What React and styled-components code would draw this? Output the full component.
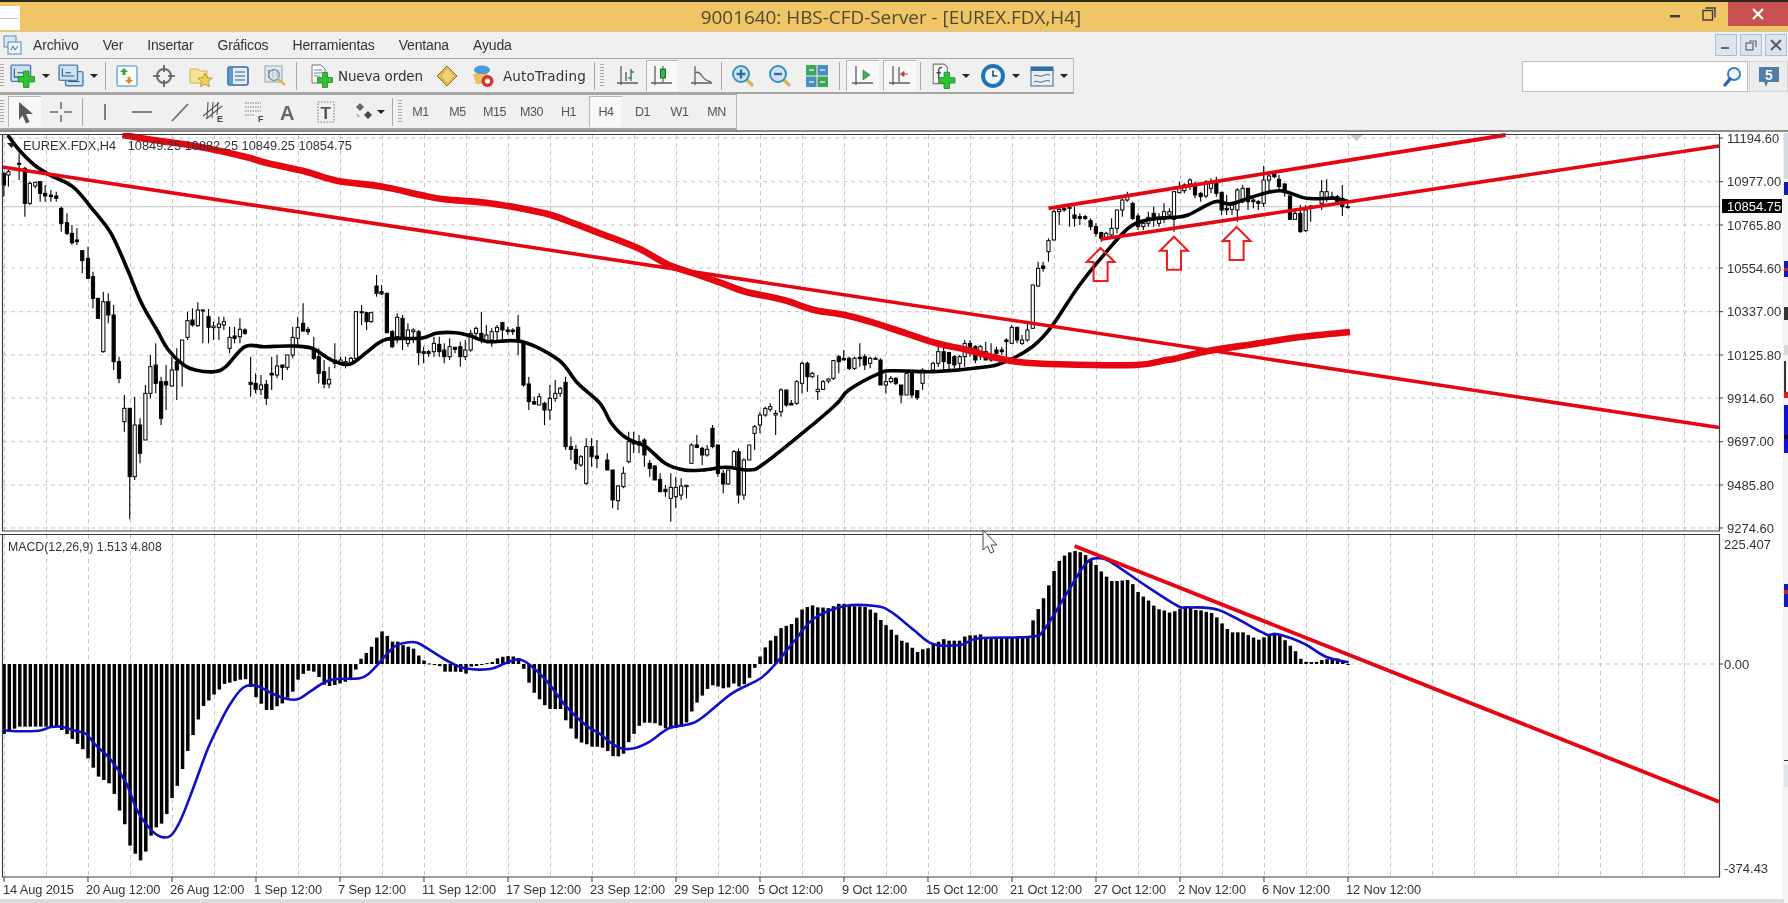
import React from "react";
import styled, { createGlobalStyle } from "styled-components";

const GlobalStyle = createGlobalStyle`
  html, body {
    margin: 0;
    padding: 0;
    background: #f0f0f0;
    overflow: hidden;
  }
`;

const UI_FONT = `"Liberation Sans", Arial, sans-serif`;

const Window = styled.div`
  width: 1788px;
  height: 903px;
  display: flex;
  flex-direction: column;
  overflow: hidden;
  font-family: ${UI_FONT};
  background: #f0f0f0;
  border-top: 2px solid #2a2a20;
  box-sizing: border-box;
  filter: blur(0.4px);
`;

const TitleBar = styled.div`
  height: 30px;
  flex: none;
  display: flex;
  align-items: center;
  background: #f0c566;
  border-bottom: 1px solid #d8c7a0;
  box-sizing: border-box;
`;

const AppLogo = styled.div`
  width: 20px;
  height: 24px;
  margin-top: 3px;
  background: #fff;
  display: flex;
  align-items: center;
`;

const LogoScribble = styled.div`
  width: 18px;
  height: 1px;
  background: #c4c4c4;
`;

const TitleText = styled.div`
  flex: none;
  width: 1500px;
  margin-left: 121px;
  text-align: center;
  font-family: "Open Sans", sans-serif;
  font-size: 18.9px;
  color: #51492f;
  white-space: nowrap;
`;

const CaptionButtons = styled.div`
  display: flex;
  align-items: flex-start;
  align-self: flex-start;
  margin-left: auto;
`;

const CaptionBtn = styled.div`
  width: ${(p) => p.$w}px;
  height: 24px;
  display: flex;
  align-items: center;
  justify-content: center;
  background: ${(p) => (p.$close ? "#c75050" : "transparent")};
`;

const MenuBar = styled.div`
  height: 26px;
  flex: none;
  display: flex;
  align-items: center;
  padding-left: 3px;
  background: #f0f0f0;
`;

const MenuItems = styled.div`
  display: flex;
  gap: 24px;
  margin-left: 11px;
  font-size: 14px;
  letter-spacing: -0.15px;
  color: #33333a;
`;

const MdiButtons = styled.div`
  display: flex;
  gap: 3px;
  margin-left: auto;
  margin-right: 1px;
`;

const MdiBtn = styled.div`
  width: 22px;
  height: 22px;
  display: flex;
  align-items: center;
  justify-content: center;
  background: #dce5ef;
  border: 1px solid #a9bfd6;
  box-sizing: border-box;
`;

const ToolRow = styled.div`
  height: ${(p) => p.$h}px;
  flex: none;
  display: flex;
  align-items: stretch;
  justify-content: space-between;
`;

const Toolbar = styled.div`
  width: ${(p) => p.$w}px;
  display: flex;
  align-items: center;
  box-sizing: border-box;
  border-top: 1px solid #a6a6a6;
  border-bottom: 2px solid #a6a6a6;
  border-right: 1px solid #b8b8b8;
  background: #f0f0f0;
`;

const Grip = styled.div`
  width: 4px;
  height: 24px;
  flex: none;
  margin-left: ${(p) => p.$ml || 0}px;
  background: repeating-linear-gradient(180deg, #a8a8a8 0 1px, #f0f0f0 1px 3px);
`;

const Sep = styled.div`
  width: 1px;
  height: 28px;
  flex: none;
  margin-left: ${(p) => p.$ml || 0}px;
  background: #a8a8a8;
`;

const Tool = styled.div`
  flex: none;
  display: flex;
  align-items: center;
  justify-content: ${(p) => (p.$w ? "center" : "flex-start")};
  gap: ${(p) => p.$gap ?? 5}px;
  width: ${(p) => (p.$w ? `${p.$w}px` : "auto")};
  height: ${(p) => (p.$active ? "31px" : "auto")};
  margin-left: ${(p) => p.$ml || 0}px;
  box-sizing: border-box;
  background: ${(p) => (p.$active ? "#f8f8f8" : "transparent")};
  border-top: ${(p) => (p.$active ? "1px solid #b4b4b4" : "none")};
  border-left: ${(p) => (p.$active ? "1px solid #b4b4b4" : "none")};
`;

const ToolLabel = styled.span`
  font-family: "DejaVu Sans", sans-serif;
  font-size: 13.5px;
  letter-spacing: ${(p) => p.$ls ?? -0.15}px;
  color: #333;
  white-space: nowrap;
`;

const Period = styled.span`
  font-size: 12.5px;
  color: #555;
  letter-spacing: -0.4px;
`;

const Caret = styled.span`
  width: 0;
  height: 0;
  flex: none;
  margin-left: ${(p) => p.$ml ?? 1}px;
  border-left: 4px solid transparent;
  border-right: 4px solid transparent;
  border-top: 4px solid #222;
`;

const SearchArea = styled.div`
  display: flex;
  align-items: stretch;
  height: 31px;
  margin-top: 3px;
`;

const SearchBox = styled.div`
  width: 226px;
  display: flex;
  align-items: center;
  justify-content: flex-end;
  padding-right: 5px;
  background: #fff;
  border: 1px solid #bdbdbd;
  box-sizing: border-box;
`;

const MailBtn = styled.div`
  width: 39px;
  margin-left: 1px;
  display: flex;
  align-items: center;
  justify-content: center;
  background: #ececec;
  border: 1px solid #d4d4d4;
  box-sizing: border-box;
`;

const Rule = styled.div`
  height: 3px;
  flex: none;
  background: #fff;
  border-top: 2px solid #8c8c8c;
  box-sizing: border-box;
`;

const ChartSvg = styled.svg`
  display: block;
  flex: none;
  width: 1788px;
  height: 770px;
  font-family: ${UI_FONT};
`;

/* ---- chart data, traced from the zoomed crops ---- */

const SX = 600 / 1568;
const at = (ox, oy) => ([x, y]) => [ox + x * SX, oy + y / 3];

// catmull-rom through the traced points, the averages in the picture are smooth
const smooth = (list) => {
  let d = `M${list[0][0].toFixed(1)} ${list[0][1].toFixed(1)}`;
  for (let i = 0; i < list.length - 1; i++) {
    const p0 = list[i - 1] || list[i];
    const p1 = list[i];
    const p2 = list[i + 1];
    const p3 = list[i + 2] || p2;
    const c1 = [p1[0] + (p2[0] - p0[0]) / 6, p1[1] + (p2[1] - p0[1]) / 6];
    const c2 = [p2[0] - (p3[0] - p1[0]) / 6, p2[1] - (p3[1] - p1[1]) / 6];
    d += `C${c1[0].toFixed(1)} ${c1[1].toFixed(1)} ${c2[0].toFixed(1)} ${c2[1].toFixed(1)} ${p2[0].toFixed(1)} ${p2[1].toFixed(1)}`;
  }
  return d;
};

const macdEnvelope = [
  ...[
    [10,612],[20,605],[50,590],[150,590],[175,612],[215,655],[240,705],[255,738],[285,760],[300,795],[310,835],[325,878],[340,948],[352,968],[365,995],[380,968],[393,920],[407,893],[420,885],[435,855],[448,808],[462,772],[475,725],[490,665],[503,620],[517,572],[530,530],[545,512],[558,495],[572,480],[585,462],[600,458],[625,450],[640,445],[655,470],[668,500],[682,520],[695,540],[710,540],[725,528],[738,520],[750,505],[765,485],[778,450],[792,432],[805,422],[820,425],[833,440],[848,465],[860,468],[875,465],[890,460],[903,455],[917,450],[930,418],[942,388],[955,372],[970,352],[985,322],[997,303],[1010,315],[1025,335],[1040,335],[1052,345],[1066,350],[1080,355],[1093,375],[1106,390],[1120,400],[1135,403],[1147,405],[1160,425],[1175,425],[1190,425],[1203,425],[1217,432],[1230,410],[1245,408],[1260,402],[1285,397],[1300,385],[1315,380],[1330,378],[1345,380],[1358,385],[1370,420],[1382,457],[1396,488],[1410,508],[1423,525],[1437,537],[1465,537],[1478,570],[1492,595],[1505,625],[1518,637],[1532,642],[1545,650],[1560,650],
  ].map(at(0, 530)),
  ...[
    [15,655],[30,678],[45,680],[60,675],[72,642],[86,617],[100,590],[112,578],[140,578],[155,585],[170,595],[195,595],[210,590],[225,580],[238,548],[252,520],[265,500],[277,482],[290,465],[305,468],[320,475],[335,473],[350,460],[362,470],[375,465],[390,445],[403,417],[417,382],[430,355],[445,332],[458,320],[472,295],[485,288],[498,285],[512,268],[525,240],[540,232],[553,225],[567,232],[580,232],[595,235],[608,230],[620,222],[635,220],[650,228],[692,230],[705,238],[718,245],[732,268],[745,283],[760,298],[773,312],[787,332],[800,335],[815,352],[828,367],[842,358],[857,355],[870,342],[885,335],[897,327],[912,332],[940,332],[952,320],[965,316],[980,316],[993,312],[1005,322],[1125,322],[1128,280],[1142,245],[1155,215],[1168,182],[1182,135],[1196,98],[1210,80],[1225,68],[1240,63],[1252,65],[1265,72],[1280,85],[1295,103],[1308,122],[1322,138],[1335,153],[1350,153],[1380,150],[1392,162],[1405,185],[1420,200],[1432,210],[1445,225],[1458,237],[1472,240],[1487,248],[1500,245],[1513,237],[1527,232],[1553,235],
  ].map(at(600, 530)),
  ...[
    [0,232],[15,240],[30,240],[45,245],[60,248],[72,258],[87,278],[100,295],[115,307],[145,307],[157,315],[170,322],[183,330],[197,323],[210,315],[225,312],[240,315],[253,330],[267,347],[280,362],[293,385],[305,395],[332,397],[350,390],[362,388],[375,385],[390,385],[405,392],[417,397],
  ].map(at(1188, 530)),
];

const macdSignal = [
  ...[
    [10,595],[22,602],[100,602],[130,592],[160,590],[190,600],[225,612],[250,645],[290,690],[330,760],[360,845],[395,900],[420,920],[445,918],[470,875],[500,790],[540,665],[570,590],[600,525],[635,473],[670,467],[710,490],[750,507],[780,507],[810,485],[850,455],[880,447],[940,445],[965,430],[990,400],[1030,350],[1060,338],[1090,338],[1130,365],[1170,393],[1215,415],[1280,417],[1320,400],[1355,388],[1385,405],[1430,455],[1480,530],[1530,585],
  ].map(at(0, 530)),
  ...[
    [0,612],[30,640],[55,655],[90,655],[130,635],[180,595],[235,582],[270,560],[345,490],[420,445],[460,400],[510,330],[560,265],[640,228],[720,228],[760,245],[820,300],[870,342],[940,345],[990,325],[1125,320],[1160,300],[1220,190],[1270,100],[1305,85],[1340,100],[1430,170],[1510,228],
  ].map(at(600, 530)),
  ...[
    [0,232],[80,240],[190,305],[210,315],[230,312],[270,325],[310,345],[360,380],[420,397],
  ].map(at(1188, 530)),
];

const slowMa = [
  ...[
    [320,15],[400,30],[520,50],[640,80],[700,100],[800,125],[880,152],[1000,170],[1100,195],[1160,208],[1270,218],[1360,235],[1440,255],[1500,280],
  ].map(at(0, 130)),
  ...[
    [0,310],[100,355],[180,405],[250,432],[320,460],[380,485],[480,510],[560,540],[640,555],[720,580],[800,610],[880,640],[960,660],[1040,685],[1100,697],[1200,703],[1400,705],[1480,690],
  ].map(at(600, 130)),
  [1174,359],[1208,351],[1254,344],[1300,337],[1350,332],
];

const fastMa = [
  ...[
    [20,15],[50,60],[90,105],[130,135],[190,170],[240,235],[290,310],[330,410],[370,520],[410,600],[440,660],[480,705],[510,720],[560,725],[590,710],[640,650],[690,650],[760,648],[815,655],[870,692],[915,702],[960,665],[1010,628],[1100,625],[1140,610],[1190,608],[1230,618],[1275,635],[1365,635],[1460,690],[1510,760],
  ].map(at(0, 130)),
  ...[
    [0,820],[30,880],[70,925],[120,950],[170,1000],[220,1020],[270,1020],[330,1012],[390,1020],[430,1000],[560,880],[620,820],[650,780],[730,730],[770,722],[870,725],[1000,712],[1060,695],[1130,650],[1180,590],[1250,470],[1320,370],[1385,290],[1440,268],[1500,262],
  ].map(at(600, 130)),
  ...[[0,645],[70,605],[110,612],[170,590],[240,572],[310,595],[380,595],[420,605]].map(at(1188, 0)),
];

// x, wick top, wick bottom, body top, body bottom, filled
const candlesA = [
  [10,125,200,130,165,1],[22,120,170,125,135,0],[50,70,150,100,102,1],[65,110,260,115,220,1],[78,155,225,160,220,0],[92,155,175,157,168,0],[105,155,215,155,190,1],[118,165,215,190,198,1],[133,180,215,195,200,1],[147,185,215,198,205,1],[160,230,305,235,280,1],[175,250,315,278,310,1],[188,285,345,310,338,1],[201,295,345,330,335,1],[215,360,430,362,392,1],[230,350,445,385,445,1],[243,425,535,440,505,1],[256,505,565,505,565,1],[270,485,668,515,665,0],[283,490,580,515,555,1],[297,525,720,555,695,1],[311,680,760,695,745,1],[325,795,905,835,875,0],[339,835,1168,835,1040,1],[352,800,1050,885,1040,0],[366,865,1000,885,970,1],[380,765,930,790,930,0],[393,675,805,710,790,0],[407,640,790,705,760,1],[421,740,885,755,865,1],[434,705,840,755,765,1],[449,680,770,720,768,0],[462,655,810,695,720,1],[476,630,770,630,700,0],[490,545,630,572,622,0],[503,535,590,570,585,1],[517,517,590,540,587,0],[530,538,640,540,542,0],[545,537,640,560,592,1],[558,575,630,588,593,0],[572,560,630,582,592,0],[585,560,600,575,585,0],[600,590,670,622,655,0],[613,590,640,618,625,1],[627,565,640,598,620,0],[640,595,615,600,610,1],[655,680,800,757,763,1],[668,730,790,760,778,1],[682,735,795,765,778,0],[696,750,825,763,805,1],[710,680,780,730,735,1],[724,675,745,708,735,0],[738,705,750,705,712,1],[751,675,720,675,712,0],[765,590,685,622,675,0],[778,560,650,592,625,0],[792,520,605,580,603,1],[805,590,615,598,605,1],[820,620,690,655,685,1],[833,655,760,680,730,1],[847,690,775,725,762,1],[860,710,775,748,762,0],[875,640,715,690,700,1],[890,680,700,690,698,0],[903,680,715,695,700,0],[917,680,705,685,700,0],[930,545,690,545,685,0],[945,525,585,545,548,1],[958,545,600,548,575,1],[970,545,578,548,575,0],[984,435,500,468,490,1],[997,465,495,485,492,1],[1011,488,610,490,608,1],[1025,600,655,605,650,1],[1038,550,640,562,620,0],[1052,555,660,565,625,1],[1066,580,650,600,640,0],[1080,595,640,600,605,0],[1094,600,705,605,668,1],[1107,650,700,665,670,1],[1120,660,680,665,670,1],[1134,620,680,640,665,0],[1148,620,680,643,665,1],[1161,640,700,660,680,1],[1175,625,690,650,680,0],[1189,650,670,652,658,1],[1203,635,710,650,680,1],[1216,630,690,660,680,0],[1230,600,665,610,660,0],[1244,590,630,595,610,0],[1258,545,640,610,630,1],[1271,585,640,615,635,0],[1285,595,650,605,630,0],[1299,585,630,592,605,0],[1313,575,630,578,600,1],[1327,590,615,600,605,1],[1340,595,615,600,605,1],[1354,555,675,592,635,1],[1368,635,770,640,765,1],[1382,740,840,762,815,1],[1396,800,825,815,822,1],[1409,790,825,800,825,0],[1423,815,885,820,840,1],[1437,765,870,805,840,0],[1451,750,815,790,805,0],[1464,770,800,775,790,0],[1478,740,960,757,950,1],[1492,920,990,950,958,1],[1505,945,1020,958,1000,1],[1518,975,1010,980,1005,0],[1532,925,1065,950,1060,0],[1546,925,1010,950,980,1],[1560,930,1015,978,985,1],
];

const candlesB = [
  [19,970,1020,990,1020,1],[33,1020,1135,1020,1110,1],[47,1065,1140,1068,1112,0],[61,1010,1075,1030,1070,0],[75,905,1000,935,995,0],[88,905,970,935,942,1],[102,915,970,935,945,1],[116,925,1010,930,975,1],[130,990,1040,1000,1015,1],[143,1005,1050,1008,1050,1],[157,1030,1085,1048,1085,1],[171,1065,1100,1078,1085,1],[185,1030,1175,1072,1105,0],[198,1040,1135,1072,1100,0],[212,1045,1110,1068,1095,0],[226,1065,1105,1066,1070,0],[239,940,1000,945,1000,0],[253,915,955,945,952,1],[267,950,1005,955,975,1],[280,945,980,958,975,0],[294,885,955,895,950,1],[308,945,1040,945,1030,1],[322,1020,1090,1030,1062,1],[335,1020,1065,1020,1062,0],[350,960,1020,965,1015,0],[362,955,1120,965,1095,1],[376,985,1110,990,1095,0],[390,945,990,945,990,0],[404,885,960,890,910,0],[418,845,910,855,885,0],[432,830,860,835,855,0],[445,820,845,830,838,0],[459,840,915,850,855,0],[473,775,860,780,845,0],[487,780,830,780,825,1],[500,810,825,820,825,1],[514,750,825,755,820,0],[528,695,790,700,760,0],[542,695,785,700,740,1],[555,725,745,730,740,0],[569,735,810,778,785,0],[583,750,780,755,778,0],[597,745,760,747,753,0],[610,690,750,692,745,0],[624,675,730,680,695,1],[637,660,690,685,690,1],[651,680,720,685,715,1],[665,680,720,685,715,0],[679,640,710,682,686,1],[692,672,720,680,705,1],[706,680,715,685,700,0],[720,680,690,685,688,1],[733,685,765,690,765,1],[747,730,790,755,765,0],[760,738,760,745,755,0],[773,742,765,745,760,1],[787,765,820,765,795,1],[801,725,795,730,795,0],[815,725,805,730,795,1],[829,780,810,782,803,1],[843,715,780,720,760,0],[870,695,730,700,720,0],[884,650,710,665,700,0],[898,650,720,665,695,1],[912,665,720,668,700,1],[926,675,715,680,705,1],[940,675,720,680,700,0],[953,630,710,640,680,0],[967,630,680,640,660,1],[981,645,700,650,690,1],[994,645,690,650,665,0],[1008,635,690,665,690,1],[1022,640,695,680,690,0],[1036,650,680,660,670,1],[1050,650,675,660,665,1],[1062,625,680,630,635,1],[1076,585,640,592,640,0],[1090,590,640,592,630,1],[1103,615,645,630,640,0],[1117,575,635,600,630,0],[1131,465,595,465,595,0],[1145,395,470,415,468,0],[1158,395,425,408,415,1],[1172,325,395,332,365,0],[1186,240,330,245,330,0],[1200,230,285,238,245,0],[1213,230,245,236,240,1],[1227,230,290,232,235,1],[1240,230,290,255,265,1],[1254,250,285,260,265,1],[1268,255,270,260,265,1],[1282,265,300,272,290,1],[1296,280,320,290,310,1],[1310,305,335,308,325,1],[1323,305,330,310,322,0],[1337,265,325,295,315,0],[1351,240,310,240,295,0],[1365,205,260,210,240,0],[1378,185,215,195,210,0],[1392,215,270,220,265,1],[1406,250,300,258,290,1],[1420,270,300,280,290,0],[1433,245,290,262,280,0],[1447,230,290,250,265,1],[1461,250,290,262,280,0],[1474,220,280,245,262,0],[1488,235,265,245,255,0],
];

const candlesC = [
  [12,95,215,95,178,0],[28,65,100,85,98,0],[43,70,100,75,92,0],[60,55,90,60,72,0],[75,65,115,80,105,1],[92,95,125,100,110,1],[108,60,115,70,108,0],[123,55,100,70,85,0],[139,50,110,70,100,1],[155,95,165,97,150,1],[170,105,165,145,150,1],[186,125,165,135,148,0],[202,85,185,90,150,0],[218,75,130,85,125,0],[234,85,150,85,125,1],[250,115,145,120,125,1],[265,120,150,125,130,1],[281,18,140,60,130,0],[297,40,95,48,60,0],[313,40,55,42,50,1],[327,45,90,58,80,1],[344,70,110,72,95,1],[360,105,180,108,178,1],[375,150,180,160,178,0],[391,135,218,160,215,1],[407,135,215,150,212,0],[422,135,185,138,140,0],[455,60,150,95,130,0],[470,58,125,95,115,0],[486,95,120,110,118,1],[502,105,130,110,125,1],[517,75,168,115,140,1],[533,125,145,140,143,1],
];

const candles = [
  ...candlesA.map((c) => ({ x: c[0] * SX, y: c.slice(1, 5).map((v) => 130 + v / 3), filled: c[5] })),
  ...candlesB.map((c) => ({ x: 600 + c[0] * SX, y: c.slice(1, 5).map((v) => 130 + v / 3), filled: c[5] })),
  ...candlesC.map((c) => ({ x: 1170 + c[0] / 3, y: c.slice(1, 5).map((v) => 160 + v / 3), filled: c[5] })),
];

const envelopeAt = (x) => {
  for (let i = 1; i < macdEnvelope.length; i++) {
    const [x0, y0] = macdEnvelope[i - 1];
    const [x1, y1] = macdEnvelope[i];
    if (x <= x1) {
      if (x < x0) return y0;
      return y0 + ((y1 - y0) * (x - x0)) / (x1 - x0 || 1);
    }
  }
  return 664;
};

const bars = Array.from({ length: 257 }, (_, i) => {
  const x = 4 + i * 5.25;
  return { x, y: envelopeAt(x) };
});

const gridX = Array.from({ length: 41 }, (_, i) => 4 + i * 42);
const priceLevels = [
  ["11194.60", 138], ["10977.00", 181.7], ["10765.80", 225], ["10554.60", 268], ["10337.00", 311.7],
  ["10125.80", 355], ["9914.60", 398], ["9697.00", 441.7], ["9485.80", 485], ["9274.60", 528],
];
const timeLabels = [
  "14 Aug 2015", "20 Aug 12:00", "26 Aug 12:00", "1 Sep 12:00", "7 Sep 12:00", "11 Sep 12:00",
  "17 Sep 12:00", "23 Sep 12:00", "29 Sep 12:00", "5 Oct 12:00", "9 Oct 12:00", "15 Oct 12:00",
  "21 Oct 12:00", "27 Oct 12:00", "2 Nov 12:00", "6 Nov 12:00", "12 Nov 12:00",
];
const upArrows = [
  [1100.6, 248],
  [1174, 236.7],
  [1236.6, 227],
];
const periods = ["M1", "M5", "M15", "M30", "H1"];

const RED = "#e60611";
const AXIS = "#3c3c3c";

const ArrowMark = ({ x, y }) => (
  <path
    d={`M${x} ${y}l14 14h-7v19h-14v-19h-7z`}
    fill="none"
    stroke="#ee1c1c"
    strokeWidth="2"
  />
);

const Chart = () => (
  <ChartSvg viewBox="0 133 1788 770">
    <rect x="0" y="133" width="1783" height="767" fill="#fff" />
    <rect x="0" y="899" width="1788" height="4" fill="#dcdcdc" />

    {/* neighbouring panel peeking in at the right edge */}
    <rect x="1784" y="133" width="4" height="770" fill="#f4f4f4" />
    <rect x="1784" y="133" width="4" height="46" fill="#d3dce6" />
    <rect x="1784" y="182" width="4" height="13" fill="#1018c0" />
    <rect x="1784" y="261" width="4" height="16" fill="#1018c0" />
    <rect x="1784" y="268" width="4" height="3" fill="#d02020" />
    <rect x="1784" y="307" width="4" height="13" fill="#333" />
    <rect x="1784" y="345" width="4" height="10" fill="#d8d8d8" />
    <rect x="1784" y="361" width="2" height="31" fill="#333" />
    <rect x="1784" y="392" width="4" height="6" fill="#e01818" />
    <rect x="1784" y="405" width="4" height="48" fill="#0c14d0" />
    <rect x="1784" y="435" width="4" height="4" fill="#111" />
    <rect x="1784" y="584" width="4" height="23" fill="#1018c0" />
    <rect x="1784" y="590" width="4" height="4" fill="#d02020" />
    <rect x="1784" y="760" width="4" height="1" fill="#333" />
    <rect x="1784" y="765" width="4" height="22" fill="#dfe5ec" />

    {/* grid */}
    <g stroke="#c4c4c4" strokeDasharray="4 4" strokeWidth="1">
      {gridX.map((x) => (
        <line key={x} x1={x + 0.5} x2={x + 0.5} y1="135" y2="877" />
      ))}
      {priceLevels.map(([label, y]) => (
        <line key={label} x1="3" x2="1719" y1={y} y2={y} />
      ))}
      <line x1="1350" x2="1719" y1="664" y2="664" />
    </g>
    <line x1="3" x2="1719" y1="206.7" y2="206.7" stroke="#c4c4c4" />
    <path d="M1350 135h13l-6.5 6z" fill="#c8c8c8" />

    {/* candles */}
    <g stroke="#000" strokeWidth="1">
      {candles.map((c, i) => (
        <g key={i}>
          <line x1={c.x} x2={c.x} y1={c.y[0]} y2={c.y[1]} strokeWidth="1.1" />
          <rect
            x={c.x - 1.6}
            y={c.y[2]}
            width="3.2"
            height={Math.max(c.y[3] - c.y[2], 1)}
            fill={c.filled ? "#000" : "#fff"}
          />
        </g>
      ))}
    </g>

    <path d={smooth(fastMa)} fill="none" stroke="#000" strokeWidth="3.6" strokeLinejoin="round" />
    <path d={smooth(slowMa)} fill="none" stroke={RED} strokeWidth="6.6" strokeLinejoin="round" />

    <line x1="2" y1="167" x2="1719" y2="427.5" stroke={RED} strokeWidth="3.6" />
    <line x1="1048.5" y1="208.3" x2="1505.6" y2="135" stroke={RED} strokeWidth="3.8" />
    <line x1="1100.6" y1="239.3" x2="1719" y2="146" stroke={RED} strokeWidth="3.6" />
    {upArrows.map(([x, y]) => (
      <ArrowMark key={x} x={x} y={y} />
    ))}

    <path d="M7 143h9l-4.5 5z" fill="#222" />
    <text x="23" y="150" fontSize="12.8" fill="#333">
      EUREX.FDX,H4{"  "}
      <tspan dx="8">10849.25 10882.25 10849.25 10854.75</tspan>
    </text>

    {/* MACD */}
    {bars.map((b) => (
      <rect
        key={b.x}
        x={b.x - 1.7}
        y={Math.min(b.y, 664)}
        width="3.5"
        height={Math.max(Math.abs(b.y - 664), 1)}
        fill="#000"
      />
    ))}
    <path d={smooth(macdSignal)} fill="none" stroke="#0f10c8" strokeWidth="2.6" strokeLinejoin="round" />
    <line x1="1074.6" y1="546" x2="1719" y2="801.7" stroke={RED} strokeWidth="3.8" />
    <text x="8" y="551" fontSize="12.3" fill="#333">MACD(12,26,9) 1.513 4.808</text>

    {/* frames and axes */}
    <g fill="none" stroke={AXIS} strokeWidth="1.2">
      <path d="M0 134.5H1719.5V531H2.5V134" />
      <path d="M0 534.5H1719.5V877H2.5V534" />
    </g>
    {priceLevels.map(([label, y]) => (
      <g key={label}>
        <line x1="1719" x2="1723" y1={y} y2={y} stroke={AXIS} />
        <text x="1727" y={y + 4.7} fontSize="13" fill="#333">{label}</text>
      </g>
    ))}
    <rect x="1722" y="199" width="60" height="14" fill="#000" />
    <text x="1727" y="211" fontSize="13" fill="#fff">10854.75</text>
    <line x1="1719" x2="1723" y1="664" y2="664" stroke={AXIS} />
    <text x="1724" y="549" fontSize="13" fill="#333">225.407</text>
    <text x="1724" y="668.5" fontSize="13" fill="#333">0.00</text>
    <text x="1724" y="873" fontSize="13" fill="#333">-374.43</text>
    {timeLabels.map((label, i) => (
      <g key={label}>
        <line x1={4 + i * 84} x2={4 + i * 84} y1="877" y2="882" stroke={AXIS} />
        <text x={(i === 0 ? 3 : 2) + i * 84} y="893.5" fontSize="12.8" letterSpacing="-0.1" fill="#333">
          {label}
        </text>
      </g>
    ))}

    {/* mouse pointer */}
    <path
      d="M983 530v20l4.5-4 3 7 3.5-1.5-3-6.5h6z"
      fill="#fff"
      stroke="#444"
      strokeWidth="1"
    />
  </ChartSvg>
);

/* ---- toolbar icons ---- */

const Ico = ({ s = 24, children }) => (
  <svg width={s} height={s} viewBox="0 0 24 24" style={{ flex: "none" }}>
    {children}
  </svg>
);

const GreenPlus = ({ x = 16, y = 16 }) => (
  <path
    d={`M${x - 2.5} ${y - 7.5}h5v5h5v5h-5v5h-5v-5h-5v-5h5z`}
    fill="#2fc436"
    stroke="#1b8a22"
    strokeWidth="0.8"
  />
);

const MiniWindow = ({ x = 1, y = 2, w = 18, h = 15 }) => (
  <g>
    <rect x={x} y={y} width={w} height={h} rx="1" fill="#cfe2f3" stroke="#4a7eae" strokeWidth="1.3" />
    <path d={`M${x + 3} ${y + 3}v${h - 7}h${w - 6}`} fill="none" stroke="#33566f" strokeWidth="1" />
    <path d={`M${x + 6} ${y + 7}h5`} stroke="#33566f" fill="none" />
  </g>
);

const IconNewChart = () => (
  <Ico s={26}>
    <MiniWindow />
    <GreenPlus x={15} y={15} />
  </Ico>
);

const IconProfiles = () => (
  <Ico s={26}>
    <MiniWindow x={7} y={8} w={16} h={13} />
    <MiniWindow x={1} y={2} w={17} h={14} />
  </Ico>
);

const IconMarket = () => (
  <Ico>
    <rect x="2" y="2" width="20" height="20" rx="1.5" fill="#f5fafd" stroke="#7caecf" strokeWidth="1.6" />
    <path d="M9 4l4 4h-2.5v3h-3V8H5z" fill="#3aa33e" />
    <path d="M14 20l-4-4h2.5v-3h3v3H18z" fill="#e58a2b" />
  </Ico>
);

const IconCrosshair = () => (
  <Ico>
    <circle cx="12" cy="12" r="7" fill="none" stroke="#6c6c6c" strokeWidth="2" />
    <path d="M12 1v7M12 16v7M1 12h7M16 12h7" stroke="#555" strokeWidth="1.6" />
  </Ico>
);

const IconFolderStar = () => (
  <Ico>
    <path d="M1 5h8l2 2h7v12H1z" fill="#f8e39a" stroke="#d4b04e" />
    <path d="M16 9l2.2 4.6 5 .6-3.7 3.4 1 5-4.5-2.5-4.5 2.5 1-5-3.7-3.4 5-.6z" fill="#f2cf52" stroke="#ad8b2b" strokeWidth="0.8" />
  </Ico>
);

const IconNavigator = () => (
  <Ico>
    <rect x="2" y="3" width="20" height="18" rx="2" fill="#e4eef8" stroke="#2d6ea8" strokeWidth="1.6" />
    <rect x="3" y="4" width="4" height="16" fill="#5f9ad0" />
    <path d="M9 8h10M9 12h10M9 16h10" stroke="#3b5a78" strokeWidth="1.1" />
  </Ico>
);

const IconTester = () => (
  <Ico>
    <rect x="2" y="2" width="17" height="16" fill="#e6e6e6" stroke="#9eb2c4" strokeWidth="1.2" />
    <path d="M6 6v8M10 5v9M14 6v7" stroke="#5a6f82" strokeWidth="1.3" />
    <circle cx="11" cy="11" r="5.4" fill="#d6e6f2" fillOpacity="0.7" stroke="#6d8aa2" strokeWidth="1.2" />
    <path d="M15 15l7 6" stroke="#d8b84c" strokeWidth="2.6" />
  </Ico>
);

const IconNewOrder = () => (
  <Ico>
    <path d="M3 1h9l4 4v14H3z" fill="#fff" stroke="#777" />
    <path d="M5 6h8M5 9h8M5 12h6" stroke="#6a8aa8" />
    <GreenPlus x={16} y={16} />
  </Ico>
);

const IconDiamond = () => (
  <Ico>
    <path d="M12 2L22 12 12 22 2 12z" fill="#e2b64a" stroke="#94702a" strokeWidth="1" />
    <path d="M12 5l7 7-7 7-5-7z" fill="#f0d27a" />
  </Ico>
);

const IconAuto = () => (
  <Ico>
    <ellipse cx="11" cy="6" rx="8" ry="4.5" fill="#4d9ad4" />
    <path d="M2 10h15v10H5z" fill="#e9c35a" />
    <circle cx="16.5" cy="17" r="6" fill="#d8342c" />
    <circle cx="16.5" cy="17" r="2.6" fill="#fff" />
  </Ico>
);

const AxisGlyph = () => (
  <path d="M5 2v19M1 19h21" stroke="#56606a" strokeWidth="1.3" fill="none" />
);

const IconBars = () => (
  <Ico>
    <AxisGlyph />
    <path d="M10 8v9M15 5v12" stroke="#56606a" strokeWidth="1.4" />
    <path d="M15 8h3M15 14h-3" stroke="#2e8b45" strokeWidth="1.4" />
  </Ico>
);

const IconCandle = () => (
  <Ico>
    <AxisGlyph />
    <path d="M13 2v16" stroke="#2d5c34" />
    <rect x="10.5" y="5" width="5" height="9" fill="#36b34a" stroke="#1c6a2c" />
  </Ico>
);

const IconLine = () => (
  <Ico>
    <AxisGlyph />
    <path d="M5 9c3-2 5 0 7 3s5 5 9 6" stroke="#56606a" strokeWidth="1.3" fill="none" />
  </Ico>
);

const IconZoom = ({ minus }) => (
  <Ico>
    <path d="M14 14l8 8" stroke="#d7b64b" strokeWidth="3.2" />
    <circle cx="10" cy="10" r="8" fill="#cfe5f6" stroke="#3d8cc4" strokeWidth="2" />
    <path d={minus ? "M6 10h8" : "M5.5 10h9M10 5.5v9"} stroke="#2f6f9f" strokeWidth="2.4" />
  </Ico>
);

const IconTile = () => (
  <Ico>
    <rect x="1" y="1" width="10.5" height="10.5" fill="#3fa55a" />
    <rect x="12.5" y="1" width="10.5" height="10.5" fill="#4a8fc4" />
    <rect x="1" y="12.5" width="10.5" height="10.5" fill="#4a8fc4" />
    <rect x="12.5" y="12.5" width="10.5" height="10.5" fill="#3fa55a" />
    <path d="M4 6h5M15 6h5M4 18h5M15 18h5" stroke="#d7e8f4" strokeWidth="1.4" />
  </Ico>
);

const IconScroll = () => (
  <Ico>
    <AxisGlyph />
    <path d="M12 6l7 5-7 5z" fill="#49ad5d" stroke="#2e7c40" strokeWidth="0.7" />
  </Ico>
);

const IconShift = () => (
  <Ico>
    <AxisGlyph />
    <path d="M11 3v15" stroke="#56606a" strokeWidth="1.3" />
    <path d="M20 10h-4v-2.5L12.5 10l3.5 2.5V10" fill="#b8473c" stroke="#b8473c" />
  </Ico>
);

const IconIndicators = () => (
  <Ico s={26}>
    <path d="M3 1h10l3 3v15H3z" fill="#f7f7f7" stroke="#777" />
    <path d="M8 15V7c0-2 1-3 3-3M6 9h4" stroke="#444" strokeWidth="1.3" fill="none" />
    <GreenPlus x={15.5} y={16} />
  </Ico>
);

const IconClock = () => (
  <Ico s={26}>
    <circle cx="12" cy="12" r="11" fill="#1f73b8" />
    <circle cx="12" cy="12" r="7.4" fill="#eef5fb" />
    <path d="M12 7v5h4" stroke="#1f4e74" strokeWidth="1.5" fill="none" />
  </Ico>
);

const IconTemplates = () => (
  <Ico>
    <rect x="1" y="3" width="22" height="19" fill="#e8eff6" stroke="#5a7ca0" strokeWidth="1.2" />
    <rect x="1" y="3" width="22" height="4" fill="#2f6ea6" />
    <path d="M4 12c3-2 5 1 8 0s4-2 8-1M4 18c3-2 5 1 8 0s4-2 8-1" stroke="#59636d" fill="none" />
  </Ico>
);

const IconPointer = () => (
  <Ico>
    <path d="M6 2l14 12h-7l3.5 8-3.5 1.5-3.5-8L6 20z" fill="#555a60" />
  </Ico>
);

const IconCross = () => (
  <Ico>
    <path d="M12 2v7M12 15v7M1 12h8M15 12h8" stroke="#6a6a6a" strokeWidth="1.5" />
  </Ico>
);

const IconStroke = ({ d }) => (
  <Ico>
    <path d={d} stroke="#6a6a6a" strokeWidth="1.7" fill="none" />
  </Ico>
);

const IconChannel = () => (
  <Ico>
    <path d="M1 16L17 3M4 19L20 6M6 2l-1 16M11 2l-1 16M16 2l-1 13" stroke="#555" strokeWidth="1.1" fill="none" />
    <text x="15" y="22" fontSize="9" fontWeight="bold" fill="#444">E</text>
  </Ico>
);

const IconFibo = () => (
  <Ico>
    <path d="M2 3h16M2 7h16M2 11h16M2 15h10" stroke="#7a7a7a" strokeDasharray="1.5 1" fill="none" />
    <text x="15" y="22" fontSize="9" fontWeight="bold" fill="#444">F</text>
  </Ico>
);

const IconLetterA = () => (
  <Ico>
    <text x="4" y="20" fontSize="20" fontWeight="bold" fill="#666" fontFamily={UI_FONT}>A</text>
  </Ico>
);

const IconLetterT = () => (
  <Ico>
    <rect x="4" y="2" width="16" height="20" fill="none" stroke="#777" strokeDasharray="1.5 1.5" />
    <text x="6.5" y="19" fontSize="17" fontWeight="bold" fill="#555" fontFamily={UI_FONT}>T</text>
  </Ico>
);

const IconShapes = () => (
  <Ico>
    <path d="M8 3l4 4-4 4-4-4z" fill="#666" />
    <path d="M16 11l4 4-4 4-4-4z" fill="#444" />
    <path d="M5 14l2 3" stroke="#888" strokeWidth="1.3" />
  </Ico>
);

const IconSearch = () => (
  <svg width="20" height="22" viewBox="0 0 20 22">
    <circle cx="12" cy="8" r="6" fill="#f4f9fd" stroke="#3f7ec0" strokeWidth="2" />
    <path d="M8 13l-5 6" stroke="#2a66ae" strokeWidth="3.4" strokeLinecap="round" />
  </svg>
);

const IconMail = () => (
  <svg width="24" height="24" viewBox="0 0 24 24">
    <path d="M2 2h20v15H11l-2 5-2-5H2z" fill="#4f7fa9" />
    <text x="8" y="15" fontSize="14" fontWeight="bold" fill="#fff" fontFamily={UI_FONT}>5</text>
  </svg>
);

const App = () => (
  <Window>
    <GlobalStyle />
    <TitleBar>
      <AppLogo>
        <LogoScribble />
      </AppLogo>
      <TitleText>9001640: HBS-CFD-Server - [EUREX.FDX,H4]</TitleText>
      <CaptionButtons>
        <CaptionBtn $w={30}>
          <svg width="12" height="12" viewBox="0 0 12 12"><rect x="1" y="7" width="10" height="2.4" fill="#3a3a3a" /></svg>
        </CaptionBtn>
        <CaptionBtn $w={38}>
          <svg width="14" height="14" viewBox="0 0 14 14" fill="none" stroke="#3a3a3a" strokeWidth="1.4">
            <rect x="1" y="3.5" width="9.5" height="9.5" />
            <path d="M3.5 1h9.5v9.5" />
          </svg>
        </CaptionBtn>
        <CaptionBtn $w={60} $close>
          <svg width="12" height="12" viewBox="0 0 12 12"><path d="M1 1l10 10M11 1L1 11" stroke="#fff" strokeWidth="2.2" /></svg>
        </CaptionBtn>
      </CaptionButtons>
    </TitleBar>

    <MenuBar>
      <svg width="19" height="20" viewBox="0 0 19 20">
        <rect x="1" y="1" width="12" height="11" fill="#dbe8f4" stroke="#5a8ab5" />
        <rect x="5" y="7" width="13" height="12" fill="#eef4fa" stroke="#5a8ab5" />
        <path d="M8 15l2-4 2 4 3-4" stroke="#4b6a86" fill="none" />
      </svg>
      <MenuItems>
        <span>Archivo</span>
        <span>Ver</span>
        <span>Insertar</span>
        <span>Gráficos</span>
        <span>Herramientas</span>
        <span>Ventana</span>
        <span>Ayuda</span>
      </MenuItems>
      <MdiButtons>
        <MdiBtn>
          <svg width="12" height="12" viewBox="0 0 12 12"><rect x="1" y="8" width="8" height="2" fill="#5b6470" /></svg>
        </MdiBtn>
        <MdiBtn>
          <svg width="12" height="12" viewBox="0 0 12 12" fill="none" stroke="#5b6470" strokeWidth="1.2">
            <rect x="1" y="4" width="7" height="7" />
            <path d="M4 2h7v6" />
          </svg>
        </MdiBtn>
        <MdiBtn>
          <svg width="12" height="12" viewBox="0 0 12 12"><path d="M1 1l10 10M11 1L1 11" stroke="#55606c" strokeWidth="2.2" /></svg>
        </MdiBtn>
      </MdiButtons>
    </MenuBar>

    <ToolRow $h={36}>
      <Toolbar $w={1074}>
        <Grip />
        <Tool $ml={6}><IconNewChart /><Caret /></Tool>
        <Tool $ml={8}><IconProfiles /><Caret /></Tool>
        <Sep $ml={7} />
        <Tool $ml={9} $w={24}><IconMarket /></Tool>
        <Tool $ml={13} $w={24}><IconCrosshair /></Tool>
        <Tool $ml={13} $w={24}><IconFolderStar /></Tool>
        <Tool $ml={13} $w={24}><IconNavigator /></Tool>
        <Tool $ml={13} $w={24}><IconTester /></Tool>
        <Sep $ml={9} />
        <Tool $ml={12}><IconNewOrder /><ToolLabel>Nueva orden</ToolLabel></Tool>
        <Tool $ml={12} $w={24}><IconDiamond /></Tool>
        <Tool $ml={12} $gap={8}><IconAuto /><ToolLabel $ls={0.2}>AutoTrading</ToolLabel></Tool>
        <Sep $ml={8} />
        <Grip $ml={5} />
        <Tool $ml={12} $w={24}><IconBars /></Tool>
        <Tool $ml={6} $w={32} $active><IconCandle /></Tool>
        <Tool $ml={12} $w={24}><IconLine /></Tool>
        <Sep $ml={7} />
        <Tool $ml={9} $w={24}><IconZoom /></Tool>
        <Tool $ml={13} $w={24}><IconZoom minus /></Tool>
        <Tool $ml={13} $w={24}><IconTile /></Tool>
        <Sep $ml={10} />
        <Tool $ml={6} $w={33} $active><IconScroll /></Tool>
        <Tool $ml={4} $w={33} $active><IconShift /></Tool>
        <Sep $ml={4} />
        <Tool $ml={9}><IconIndicators /><Caret /></Tool>
        <Tool $ml={10}><IconClock /><Caret /></Tool>
        <Tool $ml={10}><IconTemplates /><Caret /></Tool>
      </Toolbar>
      <SearchArea>
        <SearchBox><IconSearch /></SearchBox>
        <MailBtn><IconMail /></MailBtn>
      </SearchArea>
    </ToolRow>

    <ToolRow $h={36}>
      <Toolbar $w={737}>
        <Grip />
        <Tool $ml={4} $w={33} $active><IconPointer /></Tool>
        <Tool $ml={8} $w={24}><IconCross /></Tool>
        <Sep $ml={9} />
        <Tool $ml={10} $w={24}><IconStroke d="M12 4v16" /></Tool>
        <Tool $ml={13} $w={24}><IconStroke d="M2 12h20" /></Tool>
        <Tool $ml={14} $w={24}><IconStroke d="M4 21L20 4" /></Tool>
        <Tool $ml={10} $w={24}><IconChannel /></Tool>
        <Tool $ml={17} $w={24}><IconFibo /></Tool>
        <Tool $ml={9} $w={24}><IconLetterA /></Tool>
        <Tool $ml={14} $w={24}><IconLetterT /></Tool>
        <Tool $ml={14} $w={24}><IconShapes /></Tool>
        <Caret $ml={1} />
        <Sep $ml={7} />
        <Grip $ml={5} />
        {periods.map((label) => (
          <Tool key={label} $w={37}><Period>{label}</Period></Tool>
        ))}
        <Tool $ml={2} $w={33} $active><Period>H4</Period></Tool>
        <Tool $ml={2} $w={37}><Period>D1</Period></Tool>
        <Tool $w={37}><Period>W1</Period></Tool>
        <Tool $w={37}><Period>MN</Period></Tool>
      </Toolbar>
    </ToolRow>

    <Rule />
    <Chart />
  </Window>
);

export default App;
